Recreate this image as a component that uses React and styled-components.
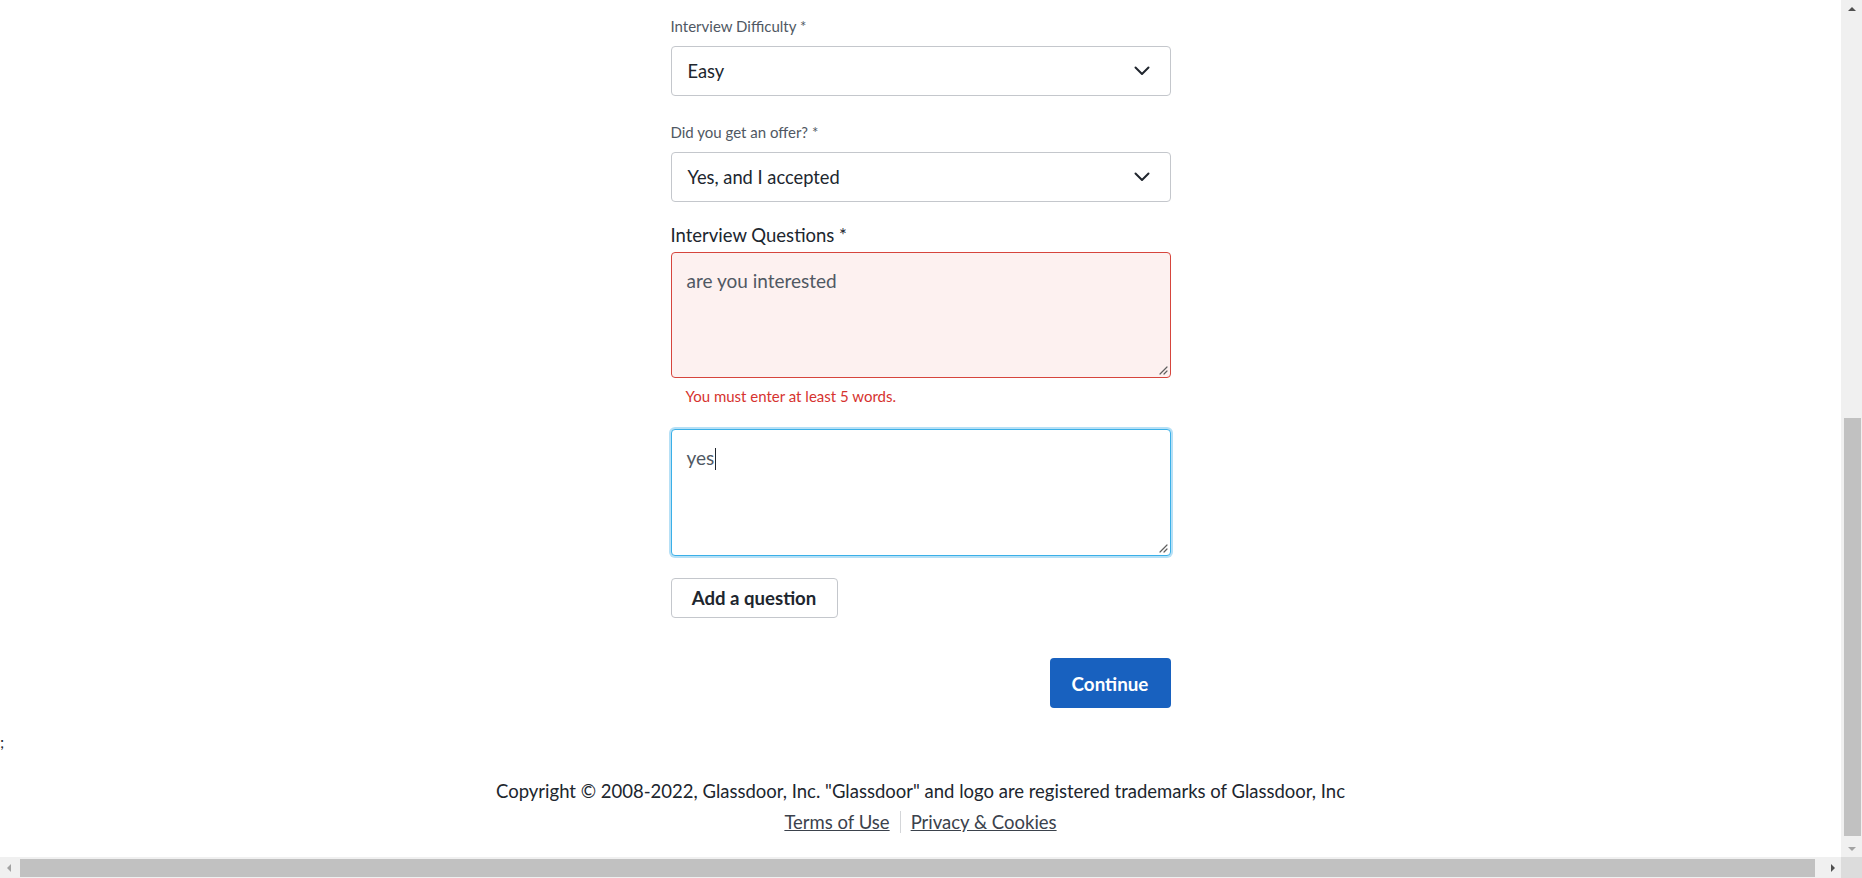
import React from 'react';
import styled, { createGlobalStyle } from 'styled-components';

const GlobalStyle = createGlobalStyle`
  html, body {
    margin: 0;
    padding: 0;
    height: 100%;
    overflow: hidden;
    background: #fff;
    font-family: Lato, "Open Sans", sans-serif;
  }
`;

const Viewport = styled.div`
  height: 100vh;
  display: grid;
  grid-template-columns: 1fr 21px;
  grid-template-rows: 1fr 21px;
`;

const Page = styled.div`
  display: flex;
  flex-direction: column;
  overflow: hidden;
`;

const Form = styled.form`
  width: 500px;
  margin: 0 auto;
  padding-top: 16px;
  display: flex;
  flex-direction: column;
`;

const Label = styled.label`
  display: block;
  font-size: ${p => (p.$big ? '18.5px' : '15px')};
  line-height: ${p => (p.$big ? '24px' : '20px')};
  color: ${p => (p.$big ? '#20262e' : '#505863')};
  margin-bottom: ${p => (p.$big ? '5px' : '10px')};
`;

const SelectBox = styled.div`
  box-sizing: border-box;
  height: 50px;
  border: 1px solid #c4c7cc;
  border-radius: 4px;
  padding: 0 20px 0 16px;
  display: flex;
  align-items: center;
  justify-content: space-between;
  font-size: 18.3px;
  color: #20262e;
  margin-bottom: ${p => p.$mb || '26px'};
`;

const TextBox = styled.div`
  position: relative;
  box-sizing: border-box;
  width: 500px;
  height: ${p => (p.$error ? '126px' : '127px')};
  padding: 16px 15px;
  border-radius: 4px;
  font-size: 19px;
  line-height: 24px;
  color: #505863;
  border: 1px solid ${p => (p.$error ? '#d6453d' : '#3bb0e8')};
  background: ${p => (p.$error ? '#fdf1f0' : '#fff')};
  box-shadow: ${p => (p.$error ? 'none' : '0 0 0 2px #b6e0f6')};
`;

const Caret = styled.span`
  display: inline-block;
  width: 1px;
  height: 22px;
  background: #20262e;
  vertical-align: -5px;
  margin-left: 1px;
`;

const Grip = styled.svg`
  position: absolute;
  right: 2px;
  bottom: 2px;
`;

const ErrorText = styled.div`
  font-size: 15px;
  line-height: 20px;
  color: #d6332f;
  padding-left: 15px;
  margin: 8px 0 23px;
`;

const AddButton = styled.button`
  align-self: flex-start;
  box-sizing: border-box;
  height: 40px;
  width: 167px;
  margin-top: 22px;
  border: 1px solid #c4c7cc;
  border-radius: 4px;
  background: #fff;
  font-family: Lato, "Open Sans", sans-serif;
  font-weight: 700;
  font-size: 18.6px;
  color: #20262e;
`;

const ContinueButton = styled.button`
  align-self: flex-end;
  box-sizing: border-box;
  height: 50px;
  width: 121px;
  margin-top: 40px;
  border: none;
  border-radius: 4px;
  background: #1861bf;
  font-family: Lato, "Open Sans", sans-serif;
  font-weight: 700;
  font-size: 18.8px;
  color: #fff;
`;

const Stray = styled.div`
  font-size: 16px;
  line-height: 19px;
  color: #20262e;
  margin-top: 24px;
`;

const Footer = styled.footer`
  margin-top: 27px;
  text-align: center;
  color: #20262e;
  font-size: 18.5px;
  line-height: 26px;
`;

const Links = styled.div`
  display: flex;
  justify-content: center;
  margin-top: 7px;
`;

const FooterLink = styled.a`
  color: #3b424c;
  text-decoration: underline;
  padding: 0 10px;
  line-height: 22px;
  & + & {
    border-left: 1px solid #d4d6d9;
  }
`;

const VTrack = styled.div`
  background: #f0f0f0;
  display: flex;
  flex-direction: column;
  align-items: center;
  padding: 0 1px 0 2px;
`;

const HTrack = styled.div`
  background: #f0f0f0;
  display: flex;
  align-items: center;
  padding: 2px 0 1px;
`;

const Corner = styled.div`
  background: #dcdcdc;
`;

const Arrow = styled.div`
  width: 17px;
  height: 17px;
  display: flex;
  align-items: center;
  justify-content: center;
  flex: none;
`;

const VThumb = styled.div`
  width: 17px;
  background: #c1c1c1;
  margin-top: ${p => p.$top}px;
  height: ${p => p.$len}px;
`;

const HThumb = styled.div`
  height: 18px;
  background: #c1c1c1;
  flex: 1;
  margin: 0 9px 0 3px;
`;

const Spacer = styled.div`
  flex: 1;
`;

const Chevron = () => (
  <svg width="16" height="10" viewBox="0 0 16 10">
    <path d="M1.5 1.5 L8 8 L14.5 1.5" fill="none" stroke="#20262e" strokeWidth="2" strokeLinecap="round" strokeLinejoin="round" />
  </svg>
);

const ResizeGrip = () => (
  <Grip width="10" height="10" viewBox="0 0 10 10">
    <path d="M9 2 L2 9 M9 6 L6 9" stroke="#5f5f5f" strokeWidth="1.2" strokeLinecap="round" />
  </Grip>
);

const Tri = ({ dir, color }) => {
  const pts = {
    up: '4,10 12,10 8,6',
    down: '4,6 12,6 8,10',
    left: '10,4 10,12 6,8',
    right: '6,4 6,12 10,8',
  }[dir];
  return (
    <svg width="16" height="16" viewBox="0 0 16 16">
      <polygon points={pts} fill={color} />
    </svg>
  );
};

export default function App() {
  return (
    <>
      <GlobalStyle />
      <Viewport>
        <Page>
          <Form onSubmit={e => e.preventDefault()}>
            <Label>Interview Difficulty *</Label>
            <SelectBox>
              <span>Easy</span>
              <Chevron />
            </SelectBox>
            <Label>Did you get an offer? *</Label>
            <SelectBox $mb="21px">
              <span>Yes, and I accepted</span>
              <Chevron />
            </SelectBox>
            <Label $big>Interview Questions *</Label>
            <TextBox $error>
              are you interested
              <ResizeGrip />
            </TextBox>
            <ErrorText>You must enter at least 5 words.</ErrorText>
            <TextBox>
              yes<Caret />
              <ResizeGrip />
            </TextBox>
            <AddButton type="button">Add a question</AddButton>
            <ContinueButton type="submit">Continue</ContinueButton>
          </Form>
          <Stray>;</Stray>
          <Footer>
            <div>Copyright © 2008-2022, Glassdoor, Inc. "Glassdoor" and logo are registered trademarks of Glassdoor, Inc</div>
            <Links>
              <FooterLink href="#">Terms of Use</FooterLink>
              <FooterLink href="#">Privacy &amp; Cookies</FooterLink>
            </Links>
          </Footer>
        </Page>
        <VTrack>
          <Arrow><Tri dir="up" color="#505050" /></Arrow>
          <VThumb $top={401} $len={418} />
          <Spacer />
          <Arrow><Tri dir="down" color="#a3a3a3" /></Arrow>
        </VTrack>
        <HTrack>
          <Arrow><Tri dir="left" color="#a3a3a3" /></Arrow>
          <HThumb />
          <Arrow><Tri dir="right" color="#505050" /></Arrow>
        </HTrack>
        <Corner />
      </Viewport>
    </>
  );
}
